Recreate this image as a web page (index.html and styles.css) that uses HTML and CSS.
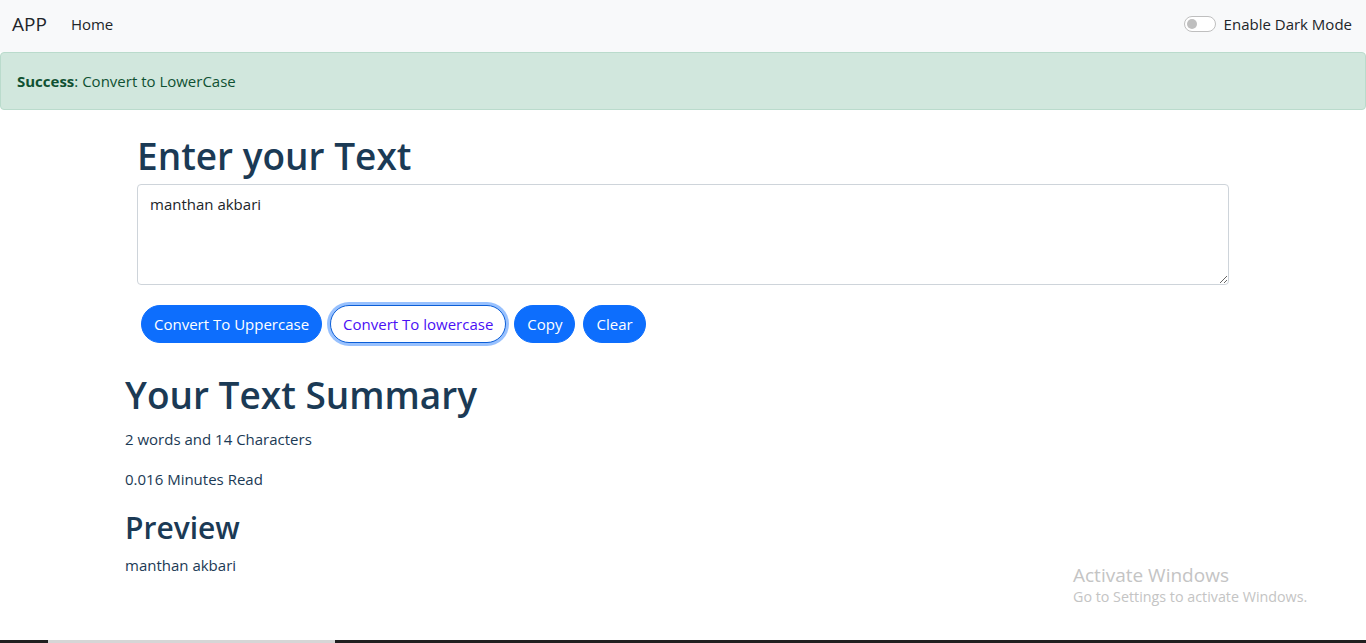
FILE: index.html
```html
<!DOCTYPE html>
<html lang="en">
<head>
<meta charset="utf-8">
<title>TextUtils</title>
<link rel="stylesheet" href="styles.css">
</head>
<body>
<nav class="navbar">
  <div class="nav-left">
    <span class="brand">APP</span>
    <span class="nav-link">Home</span>
  </div>
  <div class="switch-wrap">
    <span class="switch"><span class="knob"></span></span>
    <span class="switch-label">Enable Dark Mode</span>
  </div>
</nav>
<div class="alert"><strong>Success</strong>: Convert to LowerCase</div>
<main class="container">
  <div class="inner">
    <h1 class="h-enter">Enter your Text</h1>
    <textarea class="box">manthan akbari</textarea>
    <div class="btns">
      <button class="btn">Convert To Uppercase</button>
      <button class="btn focus">Convert To lowercase</button>
      <button class="btn">Copy</button>
      <button class="btn">Clear</button>
    </div>
  </div>
  <div class="summary">
    <h1 class="h-sum">Your Text Summary</h1>
    <p>2 words and 14 Characters</p>
    <p>0.016 Minutes Read</p>
    <h2 class="h-prev">Preview</h2>
    <p>manthan akbari</p>
  </div>
</main>
<div class="watermark">
  <div class="wm1">Activate Windows</div>
  <div class="wm2">Go to Settings to activate Windows.</div>
</div>
<div class="taskbar"><span class="tb-dark1"></span><span class="tb-light"></span><span class="tb-dark2"></span></div>
</body>
</html>
```
FILE: styles.css
```css
* { box-sizing: border-box; }
html, body { margin: 0; padding: 0; }
body {
  font-family: "Open Sans", "Noto Sans", sans-serif;
  font-size: 15px;
  line-height: 1.5;
  color: #212529;
  background: #fff;
  height: 643px;
  overflow: hidden;
  position: relative;
}
.navbar {
  height: 52px;
  background: #f8f9fa;
  display: flex;
  align-items: center;
  justify-content: space-between;
  padding: 0 12px 4px;
}
.nav-left { display: flex; align-items: center; }
.brand { font-size: 19px; color: #212529; margin-right: 24px; }
.nav-link { font-size: 15px; color: #212529; }
.switch-wrap { display: flex; align-items: center; }
.switch {
  width: 32px; height: 16px;
  border: 1px solid #bfbfbf;
  border-radius: 8px;
  background: #fff;
  position: relative;
  display: inline-block;
  margin-right: 8px;
}
.knob {
  position: absolute; left: 2px; top: 2px;
  width: 10px; height: 10px; border-radius: 50%;
  background: #bfbfbf;
}
.switch-label { font-size: 15px; color: #212529; margin-right: 2px; }
.alert {
  height: 58px;
  background: #d1e7dd;
  border: 1px solid #badbcc;
  border-radius: 4px;
  color: #0f5132;
  padding: 0 16px;
  display: flex;
  align-items: center;
  font-size: 15px;
}
.alert strong { font-weight: 700; }
.container {
  width: 1140px;
  margin: 0 auto;
  padding: 0 12px;
  color: #1b3a55;
}
.inner { padding: 24px 12px 0; }
h1, h2 { margin: 0; font-weight: 600; line-height: 1.2; color: #1b3a55; }
.h-enter { font-size: 37px; margin-bottom: 6px; }
.box {
  display: block;
  width: 100%;
  height: 101px;
  border: 1px solid #ced4da;
  border-radius: 4px;
  padding: 8px 12px;
  font-family: inherit;
  font-size: 15px;
  line-height: 1.5;
  color: #212529;
  resize: vertical;
  margin-bottom: 16px;
}
.btns { display: flex; gap: 8px; padding: 4px; }
.btn {
  height: 38px;
  padding: 0 12px;
  border-radius: 19px;
  border: 1px solid #0d6efd;
  background: #0d6efd;
  color: #fff;
  font-family: inherit;
  font-size: 15px;
}
.btn.focus {
  background: #fff;
  color: #4a10f5;
  border: 1px solid #0b5ed7;
  box-shadow: 0 0 0 3px rgba(49,132,253,.5);
}
.summary { padding-top: 26px; }
.h-sum { font-size: 37px; margin-bottom: 9px; }
.summary p { margin: 0 0 16px; font-size: 15px; line-height: 24px; }
.h-prev { font-size: 30px; margin-top: 19px; margin-bottom: 7px; }
.watermark {
  position: absolute;
  left: 1073px;
  top: 563px;
  color: #c4c4c4;
  font-family: "Open Sans", sans-serif;
}
.wm1 { font-size: 19px; line-height: 24px; }
.wm2 { font-size: 14.3px; line-height: 20px; }
.taskbar {
  position: absolute; left: 0; bottom: 0; width: 1366px; height: 3px;
  display: flex;
}
.tb-dark1 { width: 48px; background: #202020; }
.tb-light { width: 287px; background: #d6d6d6; }
.tb-dark2 { flex: 1; background: #202020; }
```
